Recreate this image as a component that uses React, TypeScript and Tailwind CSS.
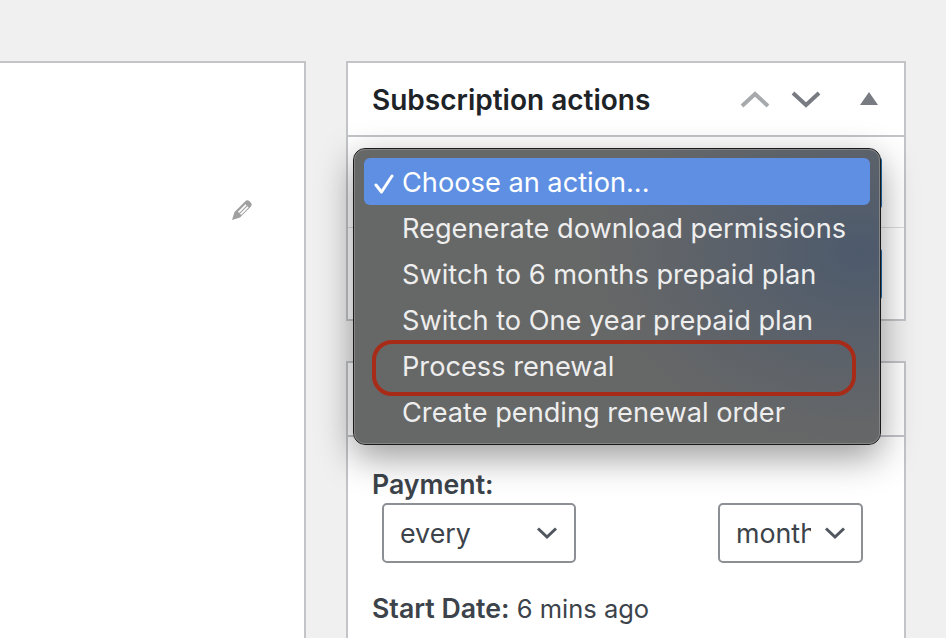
import React from "react";

function Chevron({ dir, color }: { dir: "up" | "down"; color: string }) {
  return (
    <svg width="30" height="20" viewBox="0 0 30 20" fill="none">
      <path
        d={dir === "up" ? "M2 17 L15 5 L28 17" : "M2 4 L15 16 L28 4"}
        stroke={color}
        strokeWidth="4"
      />
    </svg>
  );
}

function SelectArrow() {
  return (
    <svg width="24" height="16" viewBox="0 0 24 16" fill="none">
      <path d="M3 3.5 L12 12 L21 3.5" stroke="#50575e" strokeWidth="3" />
    </svg>
  );
}

const items = [
  "Regenerate download permissions",
  "Switch to 6 months prepaid plan",
  "Switch to One year prepaid plan",
  "Process renewal",
  "Create pending renewal order",
];

export default function App() {
  return (
    <div className="w-[946px] h-[638px] overflow-hidden bg-[#f0f0f1] flex pt-[61px] font-['Inter',sans-serif] text-[#3c434a]">
      <div className="w-[306px] h-[620px] shrink-0 bg-white border-t-2 border-r-2 border-[#c3c4c7] flex justify-end pr-[52px] pt-[138px]">
        <svg width="20" height="20" viewBox="0 0 20 20" className="mt-[-1px]">
          <path
            fill="#a0a0a0"
            d="M0 20 L2.5 12 L13 1.5 Q15 -0.5 17 0.8 L19.2 3 Q20.5 5 18.5 7 L8 17.5 Z M6 11.7 L7.2 12.9 L14.6 5.5 L13.4 4.3 Z M8 13.7 L9.2 14.9 L16.6 7.5 L15.4 6.3 Z"
            fillRule="evenodd"
          />
        </svg>
      </div>

      <div className="ml-[40px] w-[560px] shrink-0 flex flex-col gap-[40px] relative">
        <section className="h-[260px] bg-white border-2 border-[#c3c4c7] flex flex-col">
          <header className="h-[74px] shrink-0 border-b-2 border-[#c3c4c7] flex items-center pl-[24px] pr-[26px]">
            <h2 className="text-[28px] font-semibold text-[#1d2327] flex-1 whitespace-nowrap pt-[1px]">Subscription actions</h2>
            <div className="flex items-center">
              <Chevron dir="up" color="#a7aaad" />
              <div className="w-[21px]" />
              <Chevron dir="down" color="#787c82" />
              <svg width="18" height="14" viewBox="0 0 18 14" className="ml-[39px]">
                <path d="M9 0 L18 13 L0 13 Z" fill="#787c82" />
              </svg>
            </div>
          </header>
          <div className="h-[91px] shrink-0 border-b border-[#dcdcde] flex justify-end items-start pt-[20px] pr-[22px]">
            <div className="h-[52px] w-[60px] rounded-[4px] bg-[#2271b1]" />
          </div>
          <div className="flex-1 flex justify-end items-start pt-[20px] pr-[22px]">
            <div className="h-[52px] w-[60px] rounded-[4px] bg-[#2271b1]" />
          </div>
        </section>

        <section className="flex-1 bg-white border-2 border-b-0 border-[#c3c4c7] flex flex-col">
          <header className="h-[74px] shrink-0 border-b-2 border-[#c3c4c7]" />
          <div className="pl-[24px] pr-[41px] pt-[32px] text-[25.5px] leading-[30px]">
            <div className="font-semibold text-[26.7px]">Payment:</div>
            <div className="flex justify-between pl-[10px] mt-[4px]">
              <div className="w-[194px] h-[60px] border-2 border-[#8c8f94] rounded-[5px] flex items-center justify-between pl-[16px] pr-[15px] text-[26.8px] bg-white">
                <span>every</span>
                <SelectArrow />
              </div>
              <div className="w-[145px] h-[60px] border-2 border-[#8c8f94] rounded-[5px] flex items-center justify-between pl-[16px] pr-[14px] text-[26.8px] bg-white">
                <span className="w-[75px] overflow-hidden whitespace-nowrap">month</span>
                <SelectArrow />
              </div>
            </div>
            <div className="mt-[30px]">
              <span className="font-semibold text-[26.7px]">Start Date:</span> 6 mins ago
            </div>
          </div>
        </section>

        {/* native select popup */}
        <div className="absolute left-[7px] top-[87px] w-[528px] h-[297px] rounded-[12px] border border-[#1a1a1a] shadow-[0_12px_36px_rgba(0,0,0,0.4)] bg-[radial-gradient(ellipse_260px_190px_at_96%_35%,#4d5a6c_0%,#5c626a_55%,#666767_100%)] px-[10px] pt-[9px] text-[#eeeeee] text-[27.2px]">
          <div className="absolute inset-0 rounded-[11px] border border-[#858585] pointer-events-none" />
          <div className="h-[47px] rounded-[6px] bg-[#5e8fe2] text-white flex items-center relative pt-[4px]">
            <span className="w-[38px] flex justify-center pl-[2px]">
              <svg width="20" height="20" viewBox="0 0 20 20" fill="none">
                <path d="M2 11 L7.5 18 L18 2" stroke="white" strokeWidth="3" strokeLinecap="round" strokeLinejoin="round" />
              </svg>
            </span>
            <span>Choose an action...</span>
          </div>
          {items.map((t) => (
            <div key={t} className="h-[46px] flex items-center pl-[38px] pt-[2px] whitespace-nowrap">
              {t}
            </div>
          ))}
          <div className="absolute left-[18px] top-[191px] w-[484px] h-[56px] rounded-[20px] border-[4px] border-[#a82b18] pointer-events-none" />
        </div>
      </div>
    </div>
  );
}
